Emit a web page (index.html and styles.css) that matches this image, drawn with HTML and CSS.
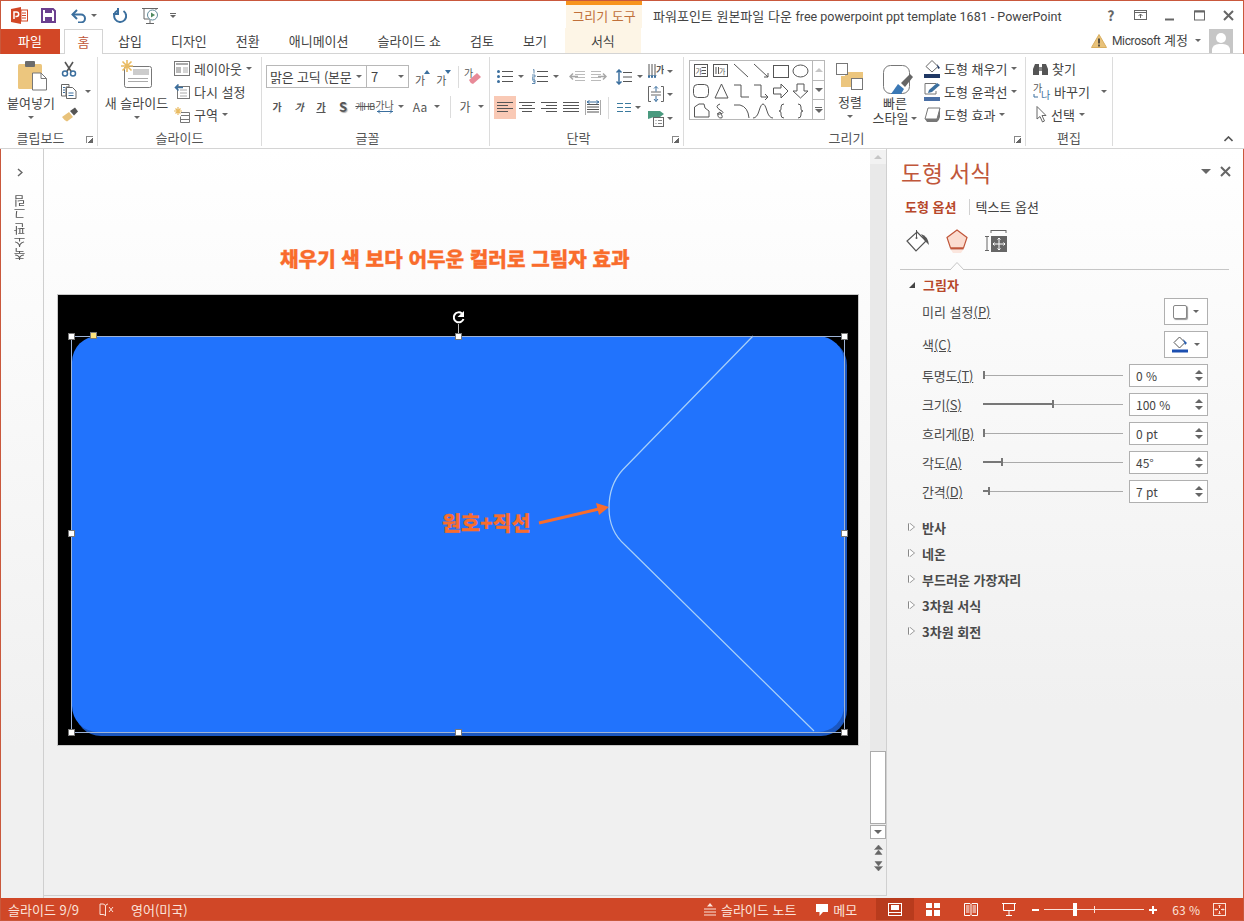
FILE: index.html
```html
<!DOCTYPE html>
<html lang="ko">
<head>
<meta charset="utf-8">
<title>PowerPoint</title>
<link rel="stylesheet" href="styles.css">
</head>
<body>
<div class="app">
  <header class="titlebar">
    <div class="qat">
      <svg class="q-ppt" width="17" height="17" viewBox="0 0 17 17"><path d="M0 2 10 0V17L0 15Z" fill="#d24726"/><rect x="10" y="3" width="6.500" height="11" fill="#fff" stroke="#d24726"/><path d="M11 6h4M11 8.500h4M11 11h4" stroke="#d24726"/><path d="M3 12V5h2.500a2 2 0 0 1 0 4.400H4.400" fill="none" stroke="#fff" stroke-width="1.500"/></svg>
      <svg class="q-save" width="15" height="15" viewBox="0 0 15 15"><path d="M1 1H12L14 3V14H1Z" fill="none" stroke="#6b3f8f" stroke-width="2"/><rect x="4" y="1" width="7" height="4" fill="#6b3f8f"/><rect x="4" y="9" width="7" height="5" fill="#6b3f8f"/></svg>
      <svg class="q-undo" width="16" height="14" viewBox="0 0 16 14"><path d="M1.500 5.500H10a4 4 0 0 1 0 8H7" fill="none" stroke="#3b6f9e" stroke-width="2"/><path d="M6 1 1.500 5.500 6 10" fill="none" stroke="#3b6f9e" stroke-width="2"/></svg>
      <i class="caret q-c1"></i>
      <svg class="q-redo" width="15" height="15" viewBox="0 0 15 15"><path d="M5.500 2.600A6 6 0 1 0 11.500 3" fill="none" stroke="#3b6f9e" stroke-width="2"/><path d="M5 0V6H0" fill="none" stroke="#3b6f9e" stroke-width="2" transform="translate(1 0)"/></svg>
      <svg class="q-show" width="18" height="18" viewBox="0 0 18 18"><path d="M0 1.500H16M2 1.500V3M14 1.500V3M8 13v3M4 16.500H12" stroke="#666" fill="none"/><path d="M2 3V12H8" stroke="#666" fill="none"/><circle cx="10.500" cy="8" r="5" fill="#fff" stroke="#5f8a9a"/><path d="M9 5.500 13 8 9 10.500Z" fill="#4f8a5f"/></svg>
      <span class="q-more"><b></b><i class="caret"></i></span>
    </div>
    <div class="ctx-title">그리기 도구</div>
    <div class="doc-title">파워포인트 원본파일 다운 <span class="lat">free powerpoint ppt template 1681 - PowerPoint</span></div>
    <div class="winbtns">
      <span class="wb help">?</span>
      <span class="wb"><svg width="13" height="10" viewBox="0 0 13 10"><rect x=".5" y=".5" width="12" height="9" fill="none" stroke="#666"/><path d="M.5 2.500h12M6.500 8V4M4.500 6l2-2 2 2" fill="none" stroke="#666"/></svg></span>
      <span class="wb"><svg width="11" height="11" viewBox="0 0 11 11"><path d="M1 9.500h9" stroke="#666" stroke-width="2"/></svg></span>
      <span class="wb"><svg width="11" height="11" viewBox="0 0 11 11"><rect x=".5" y="1" width="10" height="9" fill="none" stroke="#666"/><path d="M.5 1.500h10" stroke="#666" stroke-width="2"/></svg></span>
      <span class="wb"><svg width="11" height="11" viewBox="0 0 11 11"><path d="M1 1 10 10M10 1 1 10" stroke="#666" stroke-width="2"/></svg></span>
    </div>
  </header>

  <nav class="tabs">
    <span class="tab-file">파일</span>
    <span class="tab tab-home">홈</span>
    <span class="tab">삽입</span>
    <span class="tab">디자인</span>
    <span class="tab">전환</span>
    <span class="tab">애니메이션</span>
    <span class="tab">슬라이드 쇼</span>
    <span class="tab">검토</span>
    <span class="tab">보기</span>
    <span class="tab tab-ctx">서식</span>
    <div class="account">
      <svg width="16" height="14" viewBox="0 0 16 14"><path d="M8 .5 15.500 13.500H.5Z" fill="#e8c27a" stroke="#d9ae5f"/><path d="M8 4.500V9.500M8 10.500V12.500" stroke="#333" stroke-width="1.600"/></svg>
      <span class="acct-name"><span class="lat">Microsoft</span> 계정</span>
      <i class="caret"></i>
      <span class="avatar"><svg width="24" height="24" viewBox="0 0 24 24"><rect width="24" height="24" fill="#c6c6c6"/><circle cx="12" cy="9" r="5" fill="#fff"/><path d="M3 24V20Q4 15.500 10 15H14Q20 15.500 21 20V24Z" fill="#fff"/></svg></span>
    </div>
  </nav>

  <section class="ribbon">
    <div class="grp g-clip">
      <div class="grp-body">
        <div class="big big-paste">
          <svg width="30" height="32" viewBox="0 0 30 32"><rect x="0" y="4" width="24" height="25" rx="1.500" fill="#ecc67e"/><rect x="7" y="1" width="10" height="6" rx="1" fill="#6b6b6b"/><path d="M14.500 13H23L28.500 18.500V30H14.500Z" fill="#fff" stroke="#777"/><path d="M23 13V18.500H28.500" fill="none" stroke="#777"/></svg>
          <span class="big-label">붙여넣기</span><i class="caret"></i>
        </div>
        <div class="smallcol clip-col">
          <div class="row-s"><svg width="16" height="16" viewBox="0 0 16 16"><path d="M4 1 10.500 11M12 1 5.500 11" stroke="#555" stroke-width="1.600"/><circle cx="4" cy="12.500" r="2.500" fill="none" stroke="#3b6f9e" stroke-width="1.500"/><circle cx="12" cy="12.500" r="2.500" fill="none" stroke="#3b6f9e" stroke-width="1.500"/></svg></div>
          <div class="row-s"><svg width="16" height="15" viewBox="0 0 16 15"><path d="M.5 .5H8V3H5V12H.5Z" fill="#fff" stroke="#666"/><path d="M5.500 3.500H11.500L15 7V14.500H5.500Z" fill="#fff" stroke="#666"/><path d="M2 3.500h2M2 6h2M2 8.500h2M7.500 9h5M7.500 11.500h5" stroke="#3b6f9e"/></svg><i class="caret c-clip"></i></div>
          <div class="row-s"><svg width="18" height="15" viewBox="0 0 18 15"><path d="M1 10 8 5 12 10 6 14.500Q3 13 1 10Z" fill="#e8c27a"/><path d="M9 4 14 0.500 17 4.500 13 8.500Z" fill="#555"/></svg></div>
        </div>
      </div>
      <div class="grp-label lbl-l">클립보드</div>
      <i class="launcher"></i>
    </div>

    <div class="grp g-slide">
      <div class="grp-body">
        <div class="big big-new">
          <svg width="31" height="28" viewBox="0 0 31 28"><rect x="3.500" y="6.500" width="27" height="21" rx="2" fill="#fff" stroke="#777"/><rect x="12" y="9" width="16" height="6" fill="#ccc"/><path d="M7 18.500H27M7 21.500H27" stroke="#aaa"/><path d="M6 0V12M0 6H12M1.500 1.500 10.500 10.500M10.500 1.500 1.500 10.500" stroke="#e9bb62" stroke-width="1.600"/></svg>
          <span class="big-label">새 슬라이드</span><i class="caret"></i>
        </div>
        <div class="smallcol">
          <div class="row-s"><svg class="ico" width="16" height="15" viewBox="0 0 16 15"><rect x=".5" y=".5" width="15" height="14" fill="#fff" stroke="#777"/><rect x="2" y="2" width="12" height="2" fill="#aaa"/><rect x="2" y="6" width="5" height="6" fill="#bbb"/><path d="M9 7h5M9 9h5M9 11h5" stroke="#aaa"/></svg><span>레이아웃</span><i class="caret"></i></div>
          <div class="row-s"><svg class="ico" width="16" height="15" viewBox="0 0 16 15"><rect x="3.500" y="2.500" width="12" height="12" fill="#fff" stroke="#777"/><path d="M6 6h7M6 9h7M6 12h7" stroke="#aaa"/><path d="M9 3.500H2M4.500 .5 1.500 3.500 4.500 6.500" fill="none" stroke="#3b6f9e" stroke-width="1.600"/></svg><span>다시 설정</span></div>
          <div class="row-s"><svg class="ico" width="16" height="16" viewBox="0 0 16 16"><path d="M4 0V8M0 4H8M1.500 1.500 6.500 6.500M6.500 1.500 1.500 6.500" stroke="#e9bb62" stroke-width="1.200"/><path d="M7 5.500H15.500V15.500H6.500V9.500M7 8.500H15M7 12.500H15" fill="none" stroke="#777"/></svg><span>구역</span><i class="caret"></i></div>
        </div>
      </div>
      <div class="grp-label">슬라이드</div>
    </div>

    <div class="grp g-font">
      <div class="grp-body fontbody">
        <div class="font-r1">
          <div class="combo c-font"><span>맑은 고딕 (본문</span><i class="caret"></i></div>
          <div class="combo c-size"><span>7</span><i class="caret"></i></div>
          <span class="fbtn f-grow">가<em class="up"></em></span>
          <span class="fbtn f-shrink">가<em class="down"></em></span>
          <b class="vsep"></b>
          <svg class="eraser" width="18" height="22" viewBox="0 0 18 22"><text x="0" y="11" class="svg-ga">가</text><path d="M5 14 13 7 17 11 9 18Q6 17 5 14Z" fill="#e88a98"/></svg>
        </div>
        <div class="font-r2">
          <span class="fb b">가</span>
          <span class="fb bi">가</span>
          <span class="fb bu">가</span>
          <span class="fb bs">S</span>
          <span class="fb bx">개HB</span>
          <span class="fb bsp">가나<svg width="16" height="5" viewBox="0 0 16 5"><path d="M0 2.500H16M3 .5 1 2.500 3 4.500M13 .5 15 2.500 13 4.500" fill="none" stroke="#3b6f9e"/></svg></span><i class="caret c-sp"></i>
          <span class="fb baa">Aa</span><i class="caret c-aa"></i>
          <b class="vsep s2"></b>
          <span class="fb bcol">가</span><i class="caret c-col"></i>
        </div>
      </div>
      <div class="grp-label lbl-l">글꼴</div>
    </div>

    <div class="grp g-para">
      <div class="grp-body parabody">
        <div class="para-left">
          <div class="para-r1">
            <svg class="p1" width="16" height="15" viewBox="0 0 16 15"><path d="M5 2.500H16M5 7.500H16M5 12.500H16" stroke="#555"/><circle cx="1.500" cy="2.500" r="1.500" fill="#3b6f9e"/><circle cx="1.500" cy="7.500" r="1.500" fill="#3b6f9e"/><circle cx="1.500" cy="12.500" r="1.500" fill="#3b6f9e"/></svg><i class="caret c1"></i>
            <svg class="p2" width="16" height="15" viewBox="0 0 16 15"><path d="M5 2.500H16M5 7.500H16M5 12.500H16" stroke="#555"/><path d="M1 1 2 .5V4.500M0 6H3V8H0V10H3M0 11H3V14.500H0M1 12.700H3" fill="none" stroke="#3b6f9e" stroke-width=".8"/></svg><i class="caret c1"></i>
            <svg class="p3" width="16" height="13" viewBox="0 0 16 13"><path d="M6 1.500H16M6 4.500H16M6 7.500H16M6 10.500H16" stroke="#bbb"/><path d="M9 6.500H1M4 3.500 1 6.500 4 9.500" fill="none" stroke="#a8a8a8" stroke-width="1.500"/></svg>
            <svg class="p4" width="16" height="13" viewBox="0 0 16 13"><path d="M0 1.500H10M0 4.500H10M0 7.500H10M0 10.500H10" stroke="#bbb"/><path d="M7 6.500H15M12 3.500 15 6.500 12 9.500" fill="none" stroke="#a8a8a8" stroke-width="1.500"/></svg>
            <svg class="p5" width="16" height="16" viewBox="0 0 16 16"><path d="M7 3.500H16M7 8H16M7 12.500H16" stroke="#555"/><path d="M3 1V15M.5 3.500 3 1 5.500 3.500M.5 12.500 3 15 5.500 12.500" fill="none" stroke="#3b6f9e" stroke-width="1.500"/></svg><i class="caret c1"></i>
          </div>
          <div class="para-r2">
            <span class="al al-on"><svg width="16" height="11" viewBox="0 0 16 11"><path d="M0 .5H16M0 3.500H11M0 6.500H16M0 9.500H11" stroke="#555"/></svg></span>
            <span class="al"><svg width="16" height="11" viewBox="0 0 16 11"><path d="M0 .5H16M3 3.500H13M0 6.500H16M3 9.500H13" stroke="#555"/></svg></span>
            <span class="al"><svg width="16" height="11" viewBox="0 0 16 11"><path d="M0 .5H16M5 3.500H16M0 6.500H16M5 9.500H16" stroke="#555"/></svg></span>
            <span class="al"><svg width="16" height="11" viewBox="0 0 16 11"><path d="M0 .5H16M0 3.500H16M0 6.500H16M0 9.500H16" stroke="#555"/></svg></span>
            <span class="al"><svg width="16" height="15" viewBox="0 0 16 15"><path d="M0 0V15M16 0V15M2 4.500H14M2 7H14M2 9.500H14M2 12H14" stroke="#555"/><path d="M2 2H14M4.500 .5 2 2 4.500 3.500M11.500 .5 14 2 11.500 3.500" fill="none" stroke="#3b6f9e"/></svg></span>
            <b class="vsep s3"></b>
            <svg class="p6" width="14" height="11" viewBox="0 0 14 11"><path d="M0 1.500H6M8 1.500H14M0 5.500H6M8 5.500H14M0 9.500H6M8 9.500H14" stroke="#3b7a9e" stroke-width="1.200"/></svg><i class="caret c1"></i>
          </div>
        </div>
        <div class="para-right">
          <div class="pr"><svg width="16" height="18" viewBox="0 0 16 18"><path d="M1 2V15M4 2V15M7 2V15" stroke="#555"/><path d="M0 13 1 16 2 13M3 13 4 16 5 13M6 13 7 16 8 13" stroke="#3b6f9e" fill="none"/><text x="8" y="11" class="svg-ga b">가</text></svg><i class="caret"></i></div>
          <div class="pr"><svg width="16" height="16" viewBox="0 0 16 16"><path d="M3 .5H.5V15.500H3M13 .5H15.500V15.500H13M3 6H13M3 9H13" stroke="#666" fill="none"/><path d="M8 .5V5.500M6 2.500 8 .5 10 2.500M8 10V15.500M6 13 8 15.500 10 13" stroke="#3b6f9e" fill="none"/></svg><i class="caret"></i></div>
          <div class="pr"><svg width="16" height="16" viewBox="0 0 16 16"><path d="M0 0H12L16 3 12 6H6L0 8Z" fill="#4a9a7f"/><rect x="5.500" y="6.500" width="10" height="9" fill="#fff" stroke="#666"/><path d="M7.500 9.500h1M10 9.500h4M7.500 12.500h1M10 12.500h4" stroke="#888"/></svg><i class="caret"></i></div>
        </div>
      </div>
      <div class="grp-label lbl-l">단락</div>
      <i class="launcher"></i>
    </div>

    <div class="grp g-draw">
      <div class="grp-body drawbody">
        <div class="gallery">
          <svg width="122" height="58" viewBox="0 0 122 58">
            <g fill="none" stroke="#555">
              <rect x="4.500" y="3.500" width="13" height="12"/><path d="M11.500 6.500H16M11.500 9.500H16M11.500 12.500H16"/>
              <rect x="23.500" y="3.500" width="14" height="12"/><path d="M26 6V13M28.500 6V13"/>
              <path d="M44 3 58 16"/>
              <path d="M64 3 78 16M74 16H78V12"/>
              <rect x="83.500" y="4.500" width="15" height="12"/>
              <ellipse cx="110.500" cy="10" rx="7.500" ry="6"/>
              <rect x="3.500" y="23.500" width="15" height="13" rx="4"/>
              <path d="M31.500 23 38 37H25Z"/>
              <path d="M44 24H51V36H59"/>
              <path d="M64 24H71V36H78M75 33 78 36 75 39"/>
              <path d="M83.500 27H91V23L98 30 91 37V33H83.500Z"/>
              <path d="M107 23H114V30H118L110.500 37 103 30H107Z"/>
              <path d="M4.500 46 9 43H14L15 47 19 50V56H4.500Z" />
              <path d="M30 43Q24 45 30 49Q36 52 30 53Q25 54 30 51Q34 57 31 57Q27 57 28 52"/>
              <path d="M44 44H50Q58 46 59 57"/>
              <path d="M63 57Q67 57 69 50Q71 43 73 43Q75 43 77 50Q79 57 83 57"/>
              <path d="M92 43Q89 43 89 46V48Q89 50 87 50Q89 50 89 52V54Q89 57 92 57" transform="translate(2 0)" />
              <path d="M108 43Q111 43 111 46V48Q111 50 113 50Q111 50 111 52V54Q111 57 108 57"/>
            </g>
            <text x="5.500" y="13" class="svg-ga tiny">가</text>
            <text x="29" y="13" class="svg-ga tiny">가</text>
          </svg>
          <div class="g-scroll">
            <span class="gs"><i class="tri up dis"></i></span>
            <span class="gs"><i class="tri"></i></span>
            <span class="gs gs-last"><b></b><i class="tri"></i></span>
          </div>
        </div>
        <div class="big big-arr">
          <svg width="28" height="30" viewBox="0 0 28 30"><rect x="9" y="9" width="18" height="11" fill="#ecc67e"/><rect x="5" y="13" width="11" height="11" fill="#ecc67e"/><rect x=".5" y=".5" width="11" height="11" fill="#fff" stroke="#777"/><rect x="15.500" y="15.500" width="11" height="11" fill="#fff" stroke="#777"/></svg>
          <span class="big-label">정렬</span><i class="caret"></i>
        </div>
        <div class="big big-quick">
          <svg width="30" height="32" viewBox="0 0 30 32"><rect x=".5" y=".5" width="26" height="28" rx="7" fill="#fff" stroke="#777"/><path d="M8 29 15 19 21 24 18 29Z" fill="#3b78b5"/><path d="M18 18 27 9 30 12 22 22Z" fill="#666"/></svg>
          <span class="big-label two">빠른<br>스타일<i class="caret inl"></i></span>
        </div>
        <div class="smallcol shapecol">
          <div class="row-s"><svg class="ico" width="17" height="18" viewBox="0 0 17 18"><path d="M8 .5 14 6.500 8 12 2 6.500Z" fill="#fff" stroke="#666"/><path d="M13 4 16 8 14 9Z" fill="#1f3864"/><rect y="14" width="16" height="4" fill="#1f3864"/></svg><span>도형 채우기</span><i class="caret"></i></div>
          <div class="row-s"><svg class="ico" width="17" height="18" viewBox="0 0 17 18"><path d="M1 .5H12M1 .5V11H12V8" fill="none" stroke="#777"/><path d="M4 10 5 7 13 0 16 2 8 9Z" fill="#3b6f9e"/><rect y="14" width="16" height="4" fill="#4a6fa5"/></svg><span>도형 윤곽선</span><i class="caret"></i></div>
          <div class="row-s"><svg class="ico" width="17" height="15" viewBox="0 0 17 15"><path d="M4 1H16L13 12 H1Z" fill="#fff" stroke="#777"/><path d="M16 1 13 12H1L3 15H13Q15 14 16 10Z" fill="#777"/></svg><span>도형 효과</span><i class="caret"></i></div>
        </div>
      </div>
      <div class="grp-label lbl-l">그리기</div>
      <i class="launcher"></i>
    </div>

    <div class="grp g-edit">
      <div class="grp-body">
        <div class="smallcol editcol">
          <div class="row-s"><svg class="ico" width="15" height="14" viewBox="0 0 15 14"><path d="M2 2H6V13H0V7ZM13 2H9V13H15V7Z" fill="#555"/><path d="M6 5H9V9H6Z" fill="#888"/></svg><span>찾기</span></div>
          <div class="row-s"><svg class="ico ico-rep" width="18" height="22" viewBox="0 0 18 22"><text x="0" y="11" class="svg-ga">가</text><text x="8" y="18" class="svg-ga blue">나</text><path d="M1 13V16H5" fill="none" stroke="#3b6f9e"/></svg><span>바꾸기</span><i class="caret c-rep"></i></div>
          <div class="row-s r-sel"><svg class="ico" width="11" height="17" viewBox="0 0 11 17"><path d="M1 .5V13L4 10.500 6.500 16 8.500 15 6 9.500H10Z" fill="#fff" stroke="#666"/></svg><span>선택</span><i class="caret"></i></div>
        </div>
      </div>
      <div class="grp-label">편집</div>
    </div>
    <svg class="collapse" width="9" height="6" viewBox="0 0 9 6"><path d="M.5 5 4.500 1 8.500 5" fill="none" stroke="#555" stroke-width="1.600"/></svg>
  </section>

  <main class="main">
    <aside class="thumbs">
      <svg width="6" height="9" viewBox="0 0 6 9"><path d="M1 1 5 4.500 1 8" fill="none" stroke="#666" stroke-width="1.500"/></svg>
      <span class="thumbs-label">축소판 그림</span>
    </aside>
    <div class="editor">
      <div class="canvas">
        <h1 class="heading">채우기 색 보다 어두운 컬러로 그림자 효과</h1>
        <div class="slide">
          <svg class="slide-art" width="800" height="450" viewBox="0 0 800 450">
            <rect x="17" y="44" width="772" height="397" rx="26" fill="#1b57c0"/>
            <rect x="14" y="41" width="772" height="396" rx="26" fill="#2173fd"/>
            <path d="M695 41 564.500 175Q551 190 551 213Q551 236 567 250L756 436" fill="none" stroke="#a9d0f8" stroke-width="1.200"/>
            <path d="M481 228 541 214" stroke="#f96c2c" stroke-width="3"/>
            <path d="M551 212 538 208 541 220Z" fill="#f96c2c"/>
            <rect x="13.500" y="41.500" width="773" height="396" fill="none" stroke="#9fb4d6"/>
            <path d="M400.500 41V29" stroke="#bbb"/>
            <path d="M404 18.500A5 5 0 1 0 405.500 24" fill="none" stroke="#fff" stroke-width="2"/>
            <path d="M400.500 17H407V11Z" fill="#fff" transform="translate(-1 5)"/>
            <g fill="#fff" stroke="#777">
              <rect x="10.500" y="38.500" width="6" height="6"/>
              <rect x="397.500" y="38.500" width="6" height="6"/>
              <rect x="783.500" y="38.500" width="6" height="6"/>
              <rect x="10.500" y="235.500" width="6" height="6"/>
              <rect x="783.500" y="235.500" width="6" height="6"/>
              <rect x="10.500" y="434.500" width="6" height="6"/>
              <rect x="397.500" y="434.500" width="6" height="6"/>
              <rect x="783.500" y="434.500" width="6" height="6"/>
            </g>
            <rect x="32.500" y="37.500" width="6" height="6" fill="#ffe27a" stroke="#777"/>
          </svg>
          <div class="callout">원호+직선</div>
        </div>
      </div>
      <div class="vscroll">
        <span class="vs-btn"><i class="tri up dis"></i></span>
        <div class="vs-track"><span class="vs-thumb"></span></div>
        <span class="vs-btn on"><i class="tri"></i></span>
        <svg class="vs-page" width="9" height="10" viewBox="0 0 9 10"><path d="M4.500 0 8 4H1ZM0 4.500H9M4.500 5 8 9.500H1Z" fill="#666" stroke="#666" stroke-width=".5"/></svg>
        <svg class="vs-page" width="9" height="10" viewBox="0 0 9 10"><path d="M1 .5H8L4.500 5ZM0 5.500H9M1 6H8L4.500 10Z" fill="#666" stroke="#666" stroke-width=".5"/></svg>
      </div>
    </div>

    <aside class="pane">
      <div class="pane-head">
        <h2 class="pane-title">도형 서식</h2>
        <i class="tri big-tri"></i>
        <svg width="11" height="11" viewBox="0 0 11 11"><path d="M1 1 10 10M10 1 1 10" stroke="#666" stroke-width="2"/></svg>
      </div>
      <div class="pane-sub"><strong>도형 옵션</strong><span>텍스트 옵션</span></div>
      <div class="pane-icons">
        <svg class="pi1" width="24" height="24" viewBox="0 0 24 24"><path d="M11 3 20 12 10 22 1 12Z" fill="#fff" stroke="#555" stroke-width="1.200"/><path d="M10.500 1V9" stroke="#555"/><circle cx="10.500" cy="9" r="1" fill="#555"/><path d="M15 5Q22 7 23 16Q21 14 19 12Z" fill="#555"/></svg>
        <svg class="pi2" width="22" height="24" viewBox="0 0 22 24"><path d="M11 1 21 8.500 17.500 19H4.500L1 8.500Z" fill="#fbdcd0" stroke="#c0563a" stroke-width="1.200"/><path d="M4.500 19.500H17.500" stroke="#c0563a" stroke-width="2"/><path d="M5 21H17L15 24H7Z" fill="#fbe6de"/></svg>
        <svg class="pi3" width="22" height="22" viewBox="0 0 22 22"><path d="M6 .5H21M6 0V3M21 0V3M0 6.500H4M0 20.500H4M2 6.500V20.500" fill="none" stroke="#666"/><rect x="6" y="6" width="16" height="16" fill="#666"/><path d="M14 8V20M8 14H20M12.500 9.500 14 8 15.500 9.500M12.500 18.500 14 20 15.500 18.500M9.500 12.500 8 14 9.500 15.500M18.500 12.500 20 14 18.500 15.500" fill="none" stroke="#fff"/></svg>
      </div>
      <div class="pane-rule"><svg width="14" height="8" viewBox="0 0 14 8"><path d="M0 8 7 .5 14 8" fill="#fdfdfd" stroke="#c6c6c6"/></svg></div>

      <div class="sec sec-open"><i class="tw open"></i>그림자</div>
      <div class="frow"><label>미리 설정<u>(P)</u></label>
        <span class="pick"><i class="preset"></i><i class="caret"></i></span></div>
      <div class="frow"><label>색<u>(C)</u></label>
        <span class="pick"><svg width="16" height="17" viewBox="0 0 16 17"><path d="M7.500 1 13 6.500 7.500 12 2 6.500Z" fill="#fff" stroke="#555"/><path d="M11 3 15 7 13 9Z" fill="#2a5fb0"/><rect y="13.500" width="16" height="3" fill="#1c4fb0"/></svg><i class="caret"></i></span></div>
      <div class="srow"><label>투명도<u>(T)</u></label><div class="slider"><i class="fill" style="width:0"></i><i class="knob"></i></div><div class="spin"><span>0 %</span><em><i class="tri up"></i><i class="tri"></i></em></div></div>
      <div class="srow"><label>크기<u>(S)</u></label><div class="slider"><i class="fill" style="width:70px"></i><i class="knob"></i></div><div class="spin"><span>100 %</span><em><i class="tri up"></i><i class="tri"></i></em></div></div>
      <div class="srow"><label>흐리게<u>(B)</u></label><div class="slider"><i class="fill" style="width:0"></i><i class="knob"></i></div><div class="spin"><span>0 pt</span><em><i class="tri up"></i><i class="tri"></i></em></div></div>
      <div class="srow"><label>각도<u>(A)</u></label><div class="slider"><i class="fill" style="width:18px"></i><i class="knob"></i></div><div class="spin"><span>45°</span><em><i class="tri up"></i><i class="tri"></i></em></div></div>
      <div class="srow"><label>간격<u>(D)</u></label><div class="slider"><i class="fill" style="width:5px"></i><i class="knob"></i></div><div class="spin"><span>7 pt</span><em><i class="tri up"></i><i class="tri"></i></em></div></div>
      <div class="collapsed">
        <div class="sec"><i class="tw"></i>반사</div>
        <div class="sec"><i class="tw"></i>네온</div>
        <div class="sec"><i class="tw"></i>부드러운 가장자리</div>
        <div class="sec"><i class="tw"></i>3차원 서식</div>
        <div class="sec"><i class="tw"></i>3차원 회전</div>
      </div>
    </aside>
  </main>

  <footer class="status">
    <span class="st-slide">슬라이드 9/9</span>
    <svg class="st-book" width="15" height="14" viewBox="0 0 15 14"><path d="M1 1H4Q6 1 6.500 3V13Q6 11.500 4 11.500H1ZM6.500 3Q7 1 9 1" fill="none" stroke="#fbe3da"/><path d="M10 4 14 9M14 4 10 9" stroke="#fbe3da"/></svg>
    <span class="st-lang">영어(미국)</span>
    <div class="st-right">
      <svg width="12" height="13" viewBox="0 0 12 13"><path d="M6 0 9 3.500H3Z" fill="#fbe3da"/><path d="M0 6H12M0 9H12M0 12H12" stroke="#fbe3da"/></svg>
      <span class="st-notes">슬라이드 노트</span>
      <svg class="st-cmt" width="12" height="12" viewBox="0 0 12 12"><path d="M0 0H12V8H7L3.500 12V8H0Z" fill="#fff"/></svg>
      <span class="st-memo">메모</span>
      <span class="view on"><svg width="14" height="13" viewBox="0 0 14 13"><rect x=".5" y=".5" width="13" height="12" fill="none" stroke="#fff"/><rect x="3" y="2" width="8" height="5" fill="#fff"/><path d="M1 9.500H13" stroke="#fff"/></svg></span>
      <span class="view"><svg width="14" height="13" viewBox="0 0 14 13"><path d="M0 0H6V5H0ZM8 0H14V5H8ZM0 7H6V13H0ZM8 7H14V13H8Z" fill="#fff"/></svg></span>
      <span class="view"><svg width="14" height="13" viewBox="0 0 14 13"><path d="M.5 .5H6L7 1.500 8 .5H13.500V12.500H8L7 11.500 6 12.500H.5Z" fill="none" stroke="#fff"/><path d="M7 1.500V11.500M2 3H5.500M2 5H5.500M2 7H5.500M2 9H5.500M8.500 3H12M8.500 5H12M8.500 7H12M8.500 9H12" stroke="#fff"/></svg></span>
      <span class="view"><svg width="14" height="13" viewBox="0 0 14 13"><path d="M0 .5H14M1.500 1V7.500H12.500V1M7 7.500V12M4 12.500H10" fill="none" stroke="#fff"/></svg></span>
      <i class="z-minus"></i>
      <div class="zoomtrack"><i class="mid"></i><i class="zknob"></i></div>
      <i class="z-plus"></i>
      <span class="z-pct">63 %</span>
      <svg class="z-fit" width="13" height="13" viewBox="0 0 13 13"><rect x=".5" y=".5" width="12" height="12" fill="none" stroke="#fbe3da"/><path d="M6.500 2V5M5.500 3 6.500 2 7.500 3M6.500 8V11M5.500 10 6.500 11 7.500 10M2 6.500H5M3 5.500 2 6.500 3 7.500M8 6.500H11M10 5.500 11 6.500 10 7.500" fill="none" stroke="#fbe3da"/></svg>
    </div>
  </footer>
</div>
</body>
</html>
```

FILE: styles.css
```css
* { box-sizing: border-box; }
html, body { margin: 0; padding: 0; }
body {
  width: 1244px;
  height: 921px;
  overflow: hidden;
  font-family: "Noto Sans CJK KR", "Noto Sans", sans-serif;
  font-size: 13px;
  color: #444;
}
i, em { font-style: normal; display: inline-block; }
svg { display: block; flex: none; }
.lat { font-family: Roboto, "Noto Sans", sans-serif; font-size: 12.500px; }

.app {
  width: 1244px;
  height: 921px;
  display: flex;
  flex-direction: column;
  background: #f0f0f0;
  outline: 1px solid #c9583c;
  outline-offset: -1px;
}

.caret {
  width: 0;
  height: 0;
  flex: none;
  border-left: 3px solid transparent;
  border-right: 3px solid transparent;
  border-top: 3px solid #666;
}
.tri {
  width: 0;
  height: 0;
  border-left: 4px solid transparent;
  border-right: 4px solid transparent;
  border-top: 4px solid #666;
}
.tri.up { border-top: 0; border-bottom: 4px solid #666; }
.tri.dis { border-bottom-color: #c6c6c6; }

/* title bar */
.titlebar { height: 28px; display: flex; background: #fff; flex: none; }
.qat { width: 566px; display: flex; align-items: center; padding-left: 11px; padding-top: 3px; }
.q-save { margin-left: 13px; }
.q-undo { margin-left: 15px; }
.q-c1 { margin-left: 4px; }
.q-redo { margin-left: 15px; }
.q-show { margin-left: 15px; }
.q-more { margin-left: 10px; display: flex; flex-direction: column; align-items: center; gap: 1px; }
.q-more b { width: 6px; height: 1px; background: #666; }
.ctx-title {
  width: 76px;
  background: #fdf5e6;
  border-top: 5px solid #f7941d;
  color: #c0703a;
  text-align: center;
  line-height: 22px;
  white-space: nowrap;
}
.doc-title { margin-left: 11px; line-height: 31px; white-space: nowrap; width: 443px; }
.winbtns { display: flex; align-items: center; padding-top: 2px; }
.wb { width: 29.500px; display: flex; justify-content: center; align-items: center; }
.wb.help { font-size: 14px; font-weight: 700; color: #666; line-height: 20px; }

/* tabs */
.tabs { height: 26px; flex: none; display: flex; background: #fff; border-bottom: 1px solid #d4d4d4; line-height: 25px; }
.tab-file { width: 60px; margin-top: 1px; background: #d24726; color: #fff; text-align: center; height: 25px; line-height: 24px; }
.tab { padding: 0 14.500px; height: 26px; white-space: nowrap; }
.tab-home {
  width: 39px;
  padding: 0;
  margin: 1px .5px 0 4px;
  text-align: center;
  color: #c0563a;
  background: #fff;
  border: 1px solid #d4d4d4;
  border-bottom: 1px solid #fff;
  height: 26px;
  line-height: 24px;
}
.tab-ctx { width: 76px; padding: 0; text-align: center; margin-left: 3.500px; background: #fdf5e6; height: 25px; }
.account { margin-left: auto; display: flex; align-items: center; padding-right: 11px; height: 25px; white-space: nowrap; }
.acct-name { margin-left: 5px; }
.acct-name .lat { font-size: 12px; letter-spacing: -.35px; }
.account .caret { margin: 0 8px 0 7px; }
.avatar { width: 24px; height: 24px; margin-top: 1px; }

/* ribbon */
.ribbon { height: 95px; flex: none; display: flex; position: relative; background: #fff; border-bottom: 1px solid #d4d4d4; padding-top: 3px; }
.grp { position: relative; height: 89px; display: flex; flex-direction: column; border-right: 1px solid #dcdcdc; }
.grp-body { height: 73px; display: flex; }
.grp-label { height: 15px; line-height: 15px; text-align: center; color: #555; }
.lbl-l { padding-right: 16px; }
.g-clip { width: 98px; }
.g-slide { width: 164px; }
.g-font { width: 228px; }
.g-para { width: 194px; }
.g-draw { width: 342px; }
.g-edit { width: 87px; }
.launcher {
  position: absolute;
  right: 4px;
  bottom: 3px;
  width: 7px;
  height: 7px;
  border-left: 1px solid #888;
  border-top: 1px solid #888;
  background: linear-gradient(135deg, transparent 55%, #666 55%);
}
.big { display: flex; flex-direction: column; align-items: center; padding-top: 3px; }
.big-label { line-height: 18px; text-align: center; white-space: nowrap; }
.big .caret { margin-top: 4px; }
.big-paste { width: 52px; margin-left: 5px; }
.big-paste svg { margin-left: 3px; }
.big-paste .big-label { margin-top: 2px; }
.big-new { width: 67px; margin-left: 5px; }
.big-new .big-label { margin-top: 6px; }
.smallcol { display: flex; flex-direction: column; }
.row-s { height: 23px; display: flex; align-items: center; white-space: nowrap; }
.row-s .caret { margin-left: 4px; }
.ico { margin-right: 4px; }
.clip-col { margin-left: 3px; padding-left: 1px; }
.row-s .c-clip { margin-left: 8px; }
.g-slide .smallcol { margin-left: 4px; }

/* font group */
.fontbody { flex-direction: column; padding: 8px 0 0 4px; }
.font-r1 { display: flex; align-items: center; height: 23px; }
.combo { height: 23px; border: 1px solid #b8b8b8; display: flex; align-items: center; justify-content: space-between; background: #fff; }
.c-font { width: 101px; padding: 0 4px 0 3px; white-space: nowrap; letter-spacing: -.2px; }
.c-size { width: 42px; padding: 0 4px; border-left: 0; }
.fbtn { position: relative; font-size: 11px; color: #555; line-height: 14px; padding-top: 6px; }
.fbtn em { position: absolute; top: 3px; right: -5px; width: 0; height: 0; border-left: 3px solid transparent; border-right: 3px solid transparent; }
.fbtn em.up { border-bottom: 4px solid #3b6f9e; }
.fbtn em.down { border-top: 4px solid #3b6f9e; }
.f-grow { margin-left: 6px; }
.f-shrink { margin-left: 11px; }
.vsep { width: 1px; height: 22px; background: #dcdcdc; flex: none; }
.font-r1 .vsep { margin-left: 12px; }
.eraser { margin-left: 5px; }
.font-r2 { display: flex; align-items: center; height: 23px; margin-top: 7px; }
.fb { font-size: 10px; font-weight: 700; color: #555; text-align: center; white-space: nowrap; flex: none; }
.b, .bi, .bu, .bs { width: 22px; }
.bi { font-style: italic; }
.bu { text-decoration: underline; }
.bs { font-size: 13px; text-shadow: 1px 1px 1px #aaa; }
.bx { width: 22px; font-size: 9px; font-weight: 400; text-decoration: line-through; letter-spacing: -.5px; }
.bsp { width: 17px; font-size: 10px; font-weight: 400; line-height: 9px; display: flex; flex-direction: column; align-items: center; }
.c-sp { margin-left: 5px; }
.baa { font-size: 12px; width: 18px; margin-left: 7px; font-weight: 400; }
.c-aa { margin-left: 5px; }
.s2 { height: 22px; margin-left: 10px; }
.bcol { font-size: 12px; font-weight: 400; width: 14px; margin-left: 7px; }
.c-col { margin-left: 6px; }
.svg-ga { font-size: 10px; fill: #555; font-family: "Noto Sans CJK KR", sans-serif; }
.svg-ga.tiny { font-size: 7px; }
.svg-ga.b { font-size: 9px; font-weight: 700; }
.svg-ga.blue { fill: #3b6f9e; }

/* paragraph group */
.parabody { padding-left: 4px; }
.para-left { width: 154px; display: flex; flex-direction: column; }
.para-r1 { display: flex; align-items: center; height: 23px; margin-top: 8px; padding-left: 3px; }
.para-r1 .c1 { margin-left: 5px; }
.p2 { margin-left: 8px; }
.p3 { margin-left: 10px; }
.p4 { margin-left: 6px; }
.p5 { margin-left: 9px; }
.para-r2 { display: flex; align-items: center; height: 23px; margin-top: 8px; }
.al { width: 22px; height: 23px; display: flex; align-items: center; justify-content: center; flex: none; }
.al-on { background: #f9c9b5; }
.s3 { margin-left: 4px; }
.p6 { margin-left: 8px; }
.para-r2 .c1 { margin-left: 4px; }
.para-right { display: flex; flex-direction: column; padding-top: 3px; }
.pr { height: 23px; display: flex; align-items: center; }
.pr .caret { margin-left: 3px; }
.pr:nth-child(3) { margin-top: 2px; }

/* drawing group */
.drawbody { padding: 3px 0 0 5px; }
.gallery { width: 136px; height: 60px; display: flex; border: 1px solid #b8b8b8; background: #fff; flex: none; }
.g-scroll { width: 14px; border-left: 1px solid #b8b8b8; display: flex; flex-direction: column; }
.gs { flex: 1; display: flex; flex-direction: column; gap: 1px; align-items: center; justify-content: center; border-bottom: 1px solid #b8b8b8; }
.gs-last { border-bottom: 0; }
.gs b { width: 7px; height: 1px; background: #666; }
.big-arr { width: 30px; margin-left: 10px; }
.big-quick { width: 44px; margin-left: 8px; }
.big-quick svg { margin-left: 6px; margin-top: 2px; }
.big-quick .big-label { line-height: 15px; margin-top: -2px; }
.big-quick .caret.inl { margin: 0 0 2px 3px; vertical-align: middle; }
.shapecol { margin-left: 7px; margin-top: -3px; }
.shapecol .ico { margin-right: 3px; }

/* editing group */
.editcol { padding-left: 7px; }
.editcol .ico { margin-right: 4px; }
.editcol .ico-rep { margin-right: 3px; }
.row-s .c-rep { margin-left: 11px; }
.r-sel { padding-left: 3px; }
.collapse { position: absolute; right: 11px; bottom: 6px; }

/* main */
.main { flex: 1; min-height: 0; display: flex; }
.thumbs {
  width: 44px;
  flex: none;
  display: flex;
  flex-direction: column;
  align-items: center;
  padding: 19px 3px 0 0;
  border-right: 1px solid #cfcfcf;
  background: linear-gradient(#fff, #f0f0f0 600px);
}
.thumbs-label {
  writing-mode: vertical-rl;
  transform: rotate(180deg);
  margin-top: 17px;
  white-space: nowrap;
  line-height: 12px;
  font-size: 12.500px;
  color: #555;
}
.editor {
  width: 843px;
  flex: none;
  height: 747px;
  display: flex;
  border-bottom: 1px solid #d0d0d0;
  border-right: 1px solid #d0d0d0;
  background: linear-gradient(#fff, #f0f0f0 600px);
}
.canvas { width: 826px; padding: 97px 0 0 14px; }
.heading {
  margin: 0 0 23px 222px;
  font-size: 20.200px;
  line-height: 26px;
  font-weight: 900;
  color: #f96c2c;
  white-space: nowrap;
  -webkit-text-stroke: .3px #f96c2c;
}
.slide { position: relative; width: 800px; height: 450px; background: #000; outline: 1px solid #c8c8c8; }
.slide-art { position: absolute; left: 0; top: 0; }
.callout {
  position: absolute;
  left: 384px;
  top: 213px;
  font-size: 20.600px;
  line-height: 28px;
  font-weight: 900;
  color: #f96c2c;
  white-space: nowrap;
  -webkit-text-stroke: .3px #f96c2c;
}
.vscroll { width: 16px; flex: none; display: flex; flex-direction: column; align-items: center; padding-top: 1px; }
.vs-btn { width: 16px; height: 14px; display: flex; align-items: center; justify-content: center; background: #f2f2f2; flex: none; }
.vs-btn.on { background: #fff; border: 1px solid #ababab; }
.vs-track { width: 16px; height: 661px; background: #e9e9e9; display: flex; flex-direction: column; justify-content: flex-end; flex: none; }
.vs-thumb { width: 16px; height: 73px; margin-bottom: 1px; background: #fff; border: 1px solid #ababab; }
.vs-page { margin-top: 6px; }
.vscroll svg:first-of-type { margin-top: 6px; }

/* format pane */
.pane {
  flex: 1;
  min-width: 0;
  padding: 0 15px 0 14px;
  background: linear-gradient(#fff, #f0f0f0 560px);
  margin-right: 1px;
}
.pane-head { display: flex; align-items: center; height: 34px; margin-top: 7px; }
.pane-title { margin: 0; font-size: 22.800px; font-weight: 400; color: #c0563a; line-height: 34px; white-space: nowrap; flex: 1; }
.big-tri { margin-right: 9px; border-left-width: 5px; border-right-width: 5px; border-top-width: 5px; margin-top: -4px; }
.pane-head svg { margin-top: -4px; margin-right: -3px; }
.pane-sub { display: flex; align-items: center; height: 16px; margin: 9px 0 0 4px; line-height: 16px; white-space: nowrap; }
.pane-sub strong { color: #b7472a; font-weight: 700; padding-right: 13px; border-right: 1px solid #d0d0d0; margin-right: 5px; }
.pane-icons { display: flex; align-items: center; height: 26px; margin-top: 13px; padding-left: 5px; }
.pi2 { margin-left: 16px; }
.pi3 { margin-left: 17px; }
.pane-rule { height: 7px; margin: 9px 0 0 -1px; width: 329px; border-bottom: 1px solid #c6c6c6; position: relative; }
.pane-rule svg { position: absolute; left: 50px; top: -1px; }
.sec { height: 26px; display: flex; align-items: center; padding-left: 8px; font-weight: 700; color: #4a4a4a; white-space: nowrap; }
.sec-open { color: #b7472a; margin-top: 2px; height: 25px; }
.tw {
  width: 0;
  height: 0;
  margin-right: 8px;
  flex: none;
  border-top: 4px solid transparent;
  border-bottom: 4px solid transparent;
  border-left: 5px solid #fff;
  filter: drop-shadow(1px 0 0 #888) drop-shadow(-1px 0 0 #888);
}
.tw.open {
  border-top: 0;
  border-bottom: 6px solid #444;
  border-left: 6px solid transparent;
  border-right: 0;
  filter: none;
}
.frow { display: flex; align-items: center; justify-content: space-between; height: 27px; margin: 1px 20px 6px 21px; }
label { white-space: nowrap; color: #4a4a4a; }
label u { text-underline-offset: 1px; }
.pick { width: 44px; height: 27px; border: 1px solid #b0b0b0; display: flex; align-items: center; justify-content: center; gap: 6px; background: #fff; }
.preset { width: 14px; height: 14px; border: 1px solid #888; border-radius: 2px; background: #fff; box-shadow: 1px 1px 1px #999; }
.srow { display: flex; align-items: center; height: 23px; margin: 0 20px 6px 21px; }
.srow label { width: 61px; flex: none; letter-spacing: -.2px; }
.slider { position: relative; width: 140px; height: 1px; background: #aaa; flex: none; margin-right: 6px; }
.slider .fill { position: absolute; left: 0; top: -1px; height: 2px; background: #777; }
.slider .knob { position: absolute; left: 0; top: -4px; width: 2px; height: 8px; background: #777; }
.srow:nth-child(9) .knob { left: 69px; }
.srow:nth-child(11) .knob { left: 18px; }
.srow:nth-child(12) .knob { left: 5px; }
.spin { width: 80px; height: 23px; border: 1px solid #b0b0b0; background: #fff; display: flex; align-items: center; justify-content: space-between; padding: 0 4px 0 6px; font-size: 12px; }
.spin em { display: flex; flex-direction: column; gap: 3px; }
.collapsed { margin-top: 11px; }

/* status */
.status { height: 23px; flex: none; background: #d04727; color: #fbe3da; display: flex; align-items: center; padding-left: 8px; white-space: nowrap; }
.st-book { margin-left: 20px; }
.st-lang { margin-left: 17px; }
.st-right { margin-left: auto; display: flex; align-items: center; height: 23px; padding-right: 18px; }
.st-notes { margin-left: 5px; }
.st-cmt { margin-left: 20px; }
.st-memo { margin-left: 5px; }
.view { width: 38px; height: 23px; display: flex; align-items: center; justify-content: center; }
.view.on { background: #b83b1d; margin-left: 19px; }
.z-minus { width: 7px; height: 2px; background: #fff; margin-left: 4px; }
.zoomtrack { position: relative; width: 100px; height: 1px; background: #fbe3da; margin: 0 5px; }
.mid { position: absolute; left: 50px; top: -3px; width: 1px; height: 7px; background: #fbe3da; }
.zknob { position: absolute; left: 29px; top: -6px; width: 4px; height: 13px; background: #fff; }
.z-plus { width: 8px; height: 8px; background: linear-gradient(#fff, #fff) center/8px 2px no-repeat, linear-gradient(#fff, #fff) center/2px 8px no-repeat; }
.z-pct { margin-left: 15px; font-size: 12px; }
.z-fit { margin-left: 13px; }
```
